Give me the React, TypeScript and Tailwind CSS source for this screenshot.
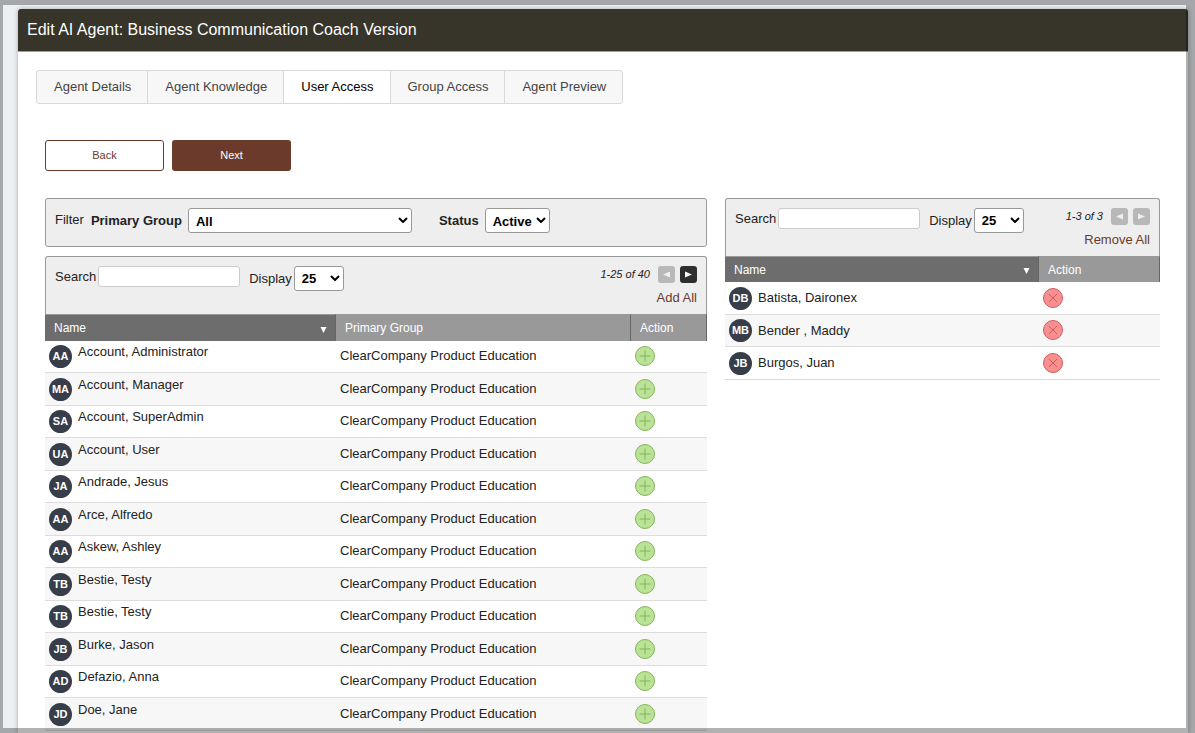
import { useState } from "react";
import type { ReactNode } from "react";
import clsx from "clsx";

interface Person {
  initials: string;
  name: string;
}

const TABS = [
  "Agent Details",
  "Agent Knowledge",
  "User Access",
  "Group Access",
  "Agent Preview",
];

const PRIMARY_GROUP = "ClearCompany Product Education";

const AVAILABLE: Person[] = [
  { initials: "AA", name: "Account, Administrator" },
  { initials: "MA", name: "Account, Manager" },
  { initials: "SA", name: "Account, SuperAdmin" },
  { initials: "UA", name: "Account, User" },
  { initials: "JA", name: "Andrade, Jesus" },
  { initials: "AA", name: "Arce, Alfredo" },
  { initials: "AA", name: "Askew, Ashley" },
  { initials: "TB", name: "Bestie, Testy" },
  { initials: "TB", name: "Bestie, Testy" },
  { initials: "JB", name: "Burke, Jason" },
  { initials: "AD", name: "Defazio, Anna" },
  { initials: "JD", name: "Doe, Jane" },
];

const SELECTED: Person[] = [
  { initials: "DB", name: "Batista, Daironex" },
  { initials: "MB", name: "Bender , Maddy" },
  { initials: "JB", name: "Burgos, Juan" },
];

function Avatar({ initials }: { initials: string }) {
  return (
    <span className="flex size-[23px] shrink-0 items-center justify-center rounded-full bg-[#373d49] text-[11px] font-bold text-white">
      {initials}
    </span>
  );
}

interface SelectProps {
  id: string;
  options: string[];
  className: string;
}

function Select({ id, options, className }: SelectProps) {
  return (
    <span className={clsx("relative block", className)}>
      <select
        id={id}
        className="h-[25px] w-full appearance-none rounded-[3px] border border-[#999] bg-white pl-[7px] text-[13px] font-bold text-black"
      >
        {options.map((o) => (
          <option key={o}>{o}</option>
        ))}
      </select>
      <svg
        viewBox="0 0 10 6"
        className="pointer-events-none absolute top-[9px] right-1 h-[6px] w-[10px]"
        fill="none"
        stroke="#000"
        strokeWidth="2"
      >
        <path d="M1 1l4 4 4-4" />
      </svg>
    </span>
  );
}

interface PagerButtonProps {
  label: string;
  direction: "prev" | "next";
  disabled?: boolean;
}

function PagerButton({ label, direction, disabled }: PagerButtonProps) {
  return (
    <button
      type="button"
      aria-label={label}
      disabled={disabled}
      className={clsx(
        "flex size-[17px] items-center justify-center rounded-[3px]",
        disabled ? "bg-[#b8b8b8] text-[#eee]" : "bg-[#2e2e2e] text-white",
      )}
    >
      <svg viewBox="0 0 7 7" className="size-[7px]" fill="currentColor">
        <path d={direction === "prev" ? "M7 .5v6l-7-3z" : "M0 .5v6l7-3z"} />
      </svg>
    </button>
  );
}

interface ListToolbarProps {
  id: string;
  range: string;
  bulkLabel: string;
  lastPage: boolean;
}

function ListToolbar({ id, range, bulkLabel, lastPage }: ListToolbarProps) {
  return (
    <div className="flex h-[58px] items-start rounded-t-[3px] border border-b-0 border-[#999] bg-[#eee] px-[9px] pt-[9px] text-[13px]">
      <label htmlFor={`${id}-search`} className="leading-[21px]">
        Search
      </label>
      <input
        id={`${id}-search`}
        type="text"
        className="ml-[2px] h-[21px] w-[142px] rounded-[3px] border border-[#ccc] bg-white px-1"
      />
      <label htmlFor={`${id}-display`} className="ml-[9px] leading-[25px]">
        Display
      </label>
      <Select
        id={`${id}-display`}
        options={["25", "50", "100"]}
        className="ml-[2px] w-[50px]"
      />
      <div className="ml-auto flex flex-col items-end">
        <div className="flex items-center">
          <em className="mr-2 text-[11px]">{range}</em>
          <PagerButton label="Previous page" direction="prev" disabled />
          <span className="w-[5px]" />
          <PagerButton label="Next page" direction="next" disabled={lastPage} />
        </div>
        <button type="button" className="mt-[5px] leading-5 text-[#6b3a2a]">
          {bulkLabel}
        </button>
      </div>
    </div>
  );
}

function HeaderCell({
  children,
  sorted,
  className,
}: {
  children: ReactNode;
  sorted?: boolean;
  className?: string;
}) {
  return (
    <th
      scope="col"
      className={clsx(
        "border-t border-r border-t-[#999] border-r-[#666] pr-2 pl-[9px] text-left text-[12px] font-normal text-white",
        sorted ? "bg-[#6d6d6d]" : "bg-[#999]",
        className,
      )}
    >
      <span className="flex items-center justify-between">
        {children}
        {sorted && (
          <svg viewBox="0 0 7 6" className="mt-[3px] h-[6px] w-[7px]" fill="#fff">
            <path d="M.5 0h6l-3 6z" />
          </svg>
        )}
      </span>
    </th>
  );
}

function AddButton({ name }: { name: string }) {
  return (
    <button type="button" aria-label={`Add ${name}`} className="block">
      <svg viewBox="0 0 20 20" className="size-5" fill="none">
        <circle cx="10" cy="10" r="9.5" fill="#bbe396" stroke="#82b35c" />
        <path d="M10 4.500v11M4.500 10h11" stroke="#82b35c" />
      </svg>
    </button>
  );
}

function RemoveButton({ name }: { name: string }) {
  return (
    <button type="button" aria-label={`Remove ${name}`} className="block">
      <svg viewBox="0 0 20 20" className="size-5" fill="none">
        <circle cx="10" cy="10" r="9.5" fill="#f99090" stroke="#d05b5e" />
        <path d="M6 6l8 8M14 6l-8 8" stroke="#d05b5e" />
      </svg>
    </button>
  );
}

export default function App() {
  const [activeTab, setActiveTab] = useState("User Access");

  return (
    <div className="flex min-h-screen flex-col bg-[#ecf0f3] pt-[9px] pr-[7px] pl-[18px] font-['Liberation_Sans',Arial,sans-serif] text-[13px] text-[#222]">
      <main className="flex flex-1 flex-col rounded-t-[3px] bg-white shadow-[0_0_5px_rgba(0,0,0,0.3)]">
        <header className="flex h-[43px] items-center rounded-t-[3px] border-b border-[#5fb3dc] bg-[#37342a] px-[9px]">
          <h1 className="text-[16px] text-white">
            Edit AI Agent: Business Communication Coach Version
          </h1>
        </header>

        <nav className="mt-[18px] ml-[18px] flex h-[34px] self-start rounded-[3px] border border-[#d9d9d9] bg-[#f7f7f7]">
          {TABS.map((tab) => (
            <button
              key={tab}
              type="button"
              onClick={() => setActiveTab(tab)}
              className={clsx(
                "border-r border-[#d9d9d9] pr-4 pl-[17px] last:border-r-0",
                tab === activeTab ? "bg-white text-black" : "text-[#444]",
              )}
            >
              {tab}
            </button>
          ))}
        </nav>

        <div className="mt-9 ml-[27px] flex gap-2 text-[11px]">
          <button
            type="button"
            className="h-[31px] w-[119px] rounded-[3px] border border-[#6b3a2a] bg-white text-[#6b3a2a]"
          >
            Back
          </button>
          <button
            type="button"
            className="h-[31px] w-[119px] rounded-[3px] bg-[#6b3a2a] text-white"
          >
            Next
          </button>
        </div>

        <div className="mt-[27px] mr-7 ml-[27px] grid grid-cols-[662fr_435fr] items-start gap-[18px]">
          <section>
            {/* Filters */}
            <div className="mb-[9px] flex h-[49px] items-start rounded-[3px] border border-[#999] bg-[#eee] px-[9px] pt-[9px] leading-[25px]">
              <span className="leading-6">Filter</span>
              <label htmlFor="primary-group" className="ml-[7px] font-bold">
                Primary Group
              </label>
              <Select
                id="primary-group"
                options={["All", PRIMARY_GROUP]}
                className="ml-[6px] w-[224px]"
              />
              <label htmlFor="status" className="ml-[27px] font-bold">
                Status
              </label>
              <Select
                id="status"
                options={["Active", "Inactive"]}
                className="ml-[6px] w-[65px]"
              />
            </div>

            <ListToolbar
              id="available"
              range="1-25 of 40"
              bulkLabel="Add All"
              lastPage={false}
            />
            <table className="w-full table-fixed border-separate border-spacing-0">
              <thead>
                <tr className="h-[27px]">
                  <HeaderCell sorted className="w-[291px]">
                    Name
                  </HeaderCell>
                  <HeaderCell>Primary Group</HeaderCell>
                  <HeaderCell className="w-[76px]">Action</HeaderCell>
                </tr>
              </thead>
              <tbody>
                {AVAILABLE.map((p, i) => (
                  <tr
                    key={i}
                    className="odd:h-8 even:h-[33px] even:bg-[#f7f7f7] [&>td]:border-b [&>td]:border-[#ddd]"
                  >
                    <td className="py-0 pl-1">
                      <div className="flex items-start gap-[6px]">
                        <Avatar initials={p.initials} />
                        <span className="leading-[14px]">{p.name}</span>
                      </div>
                    </td>
                    <td className="pb-px pl-1">{PRIMARY_GROUP}</td>
                    <td className="pb-px pl-1">
                      <AddButton name={p.name} />
                    </td>
                  </tr>
                ))}
              </tbody>
            </table>
          </section>

          <section>
            <ListToolbar
              id="selected"
              range="1-3 of 3"
              bulkLabel="Remove All"
              lastPage
            />
            <table className="w-full table-fixed border-separate border-spacing-0">
              <thead>
                <tr className="h-[26px]">
                  <HeaderCell sorted className="w-[314px]">
                    Name
                  </HeaderCell>
                  <HeaderCell>Action</HeaderCell>
                </tr>
              </thead>
              <tbody>
                {SELECTED.map((p) => (
                  <tr
                    key={p.name}
                    className="odd:h-[33px] even:h-8 even:bg-[#f7f7f7] [&>td]:border-b [&>td]:border-[#ddd]"
                  >
                    <td className="py-0 pl-1">
                      <div className="flex items-center gap-[6px]">
                        <Avatar initials={p.initials} />
                        {p.name}
                      </div>
                    </td>
                    <td className="pb-px pl-1">
                      <RemoveButton name={p.name} />
                    </td>
                  </tr>
                ))}
              </tbody>
            </table>
          </section>
        </div>
      </main>

      {/* Dimmed frame around the dialog */}
      <div className="pointer-events-none fixed inset-0 border-t-[5px] border-r-[9px] border-b-[5px] border-l-[3px] border-black/30" />
    </div>
  );
}
